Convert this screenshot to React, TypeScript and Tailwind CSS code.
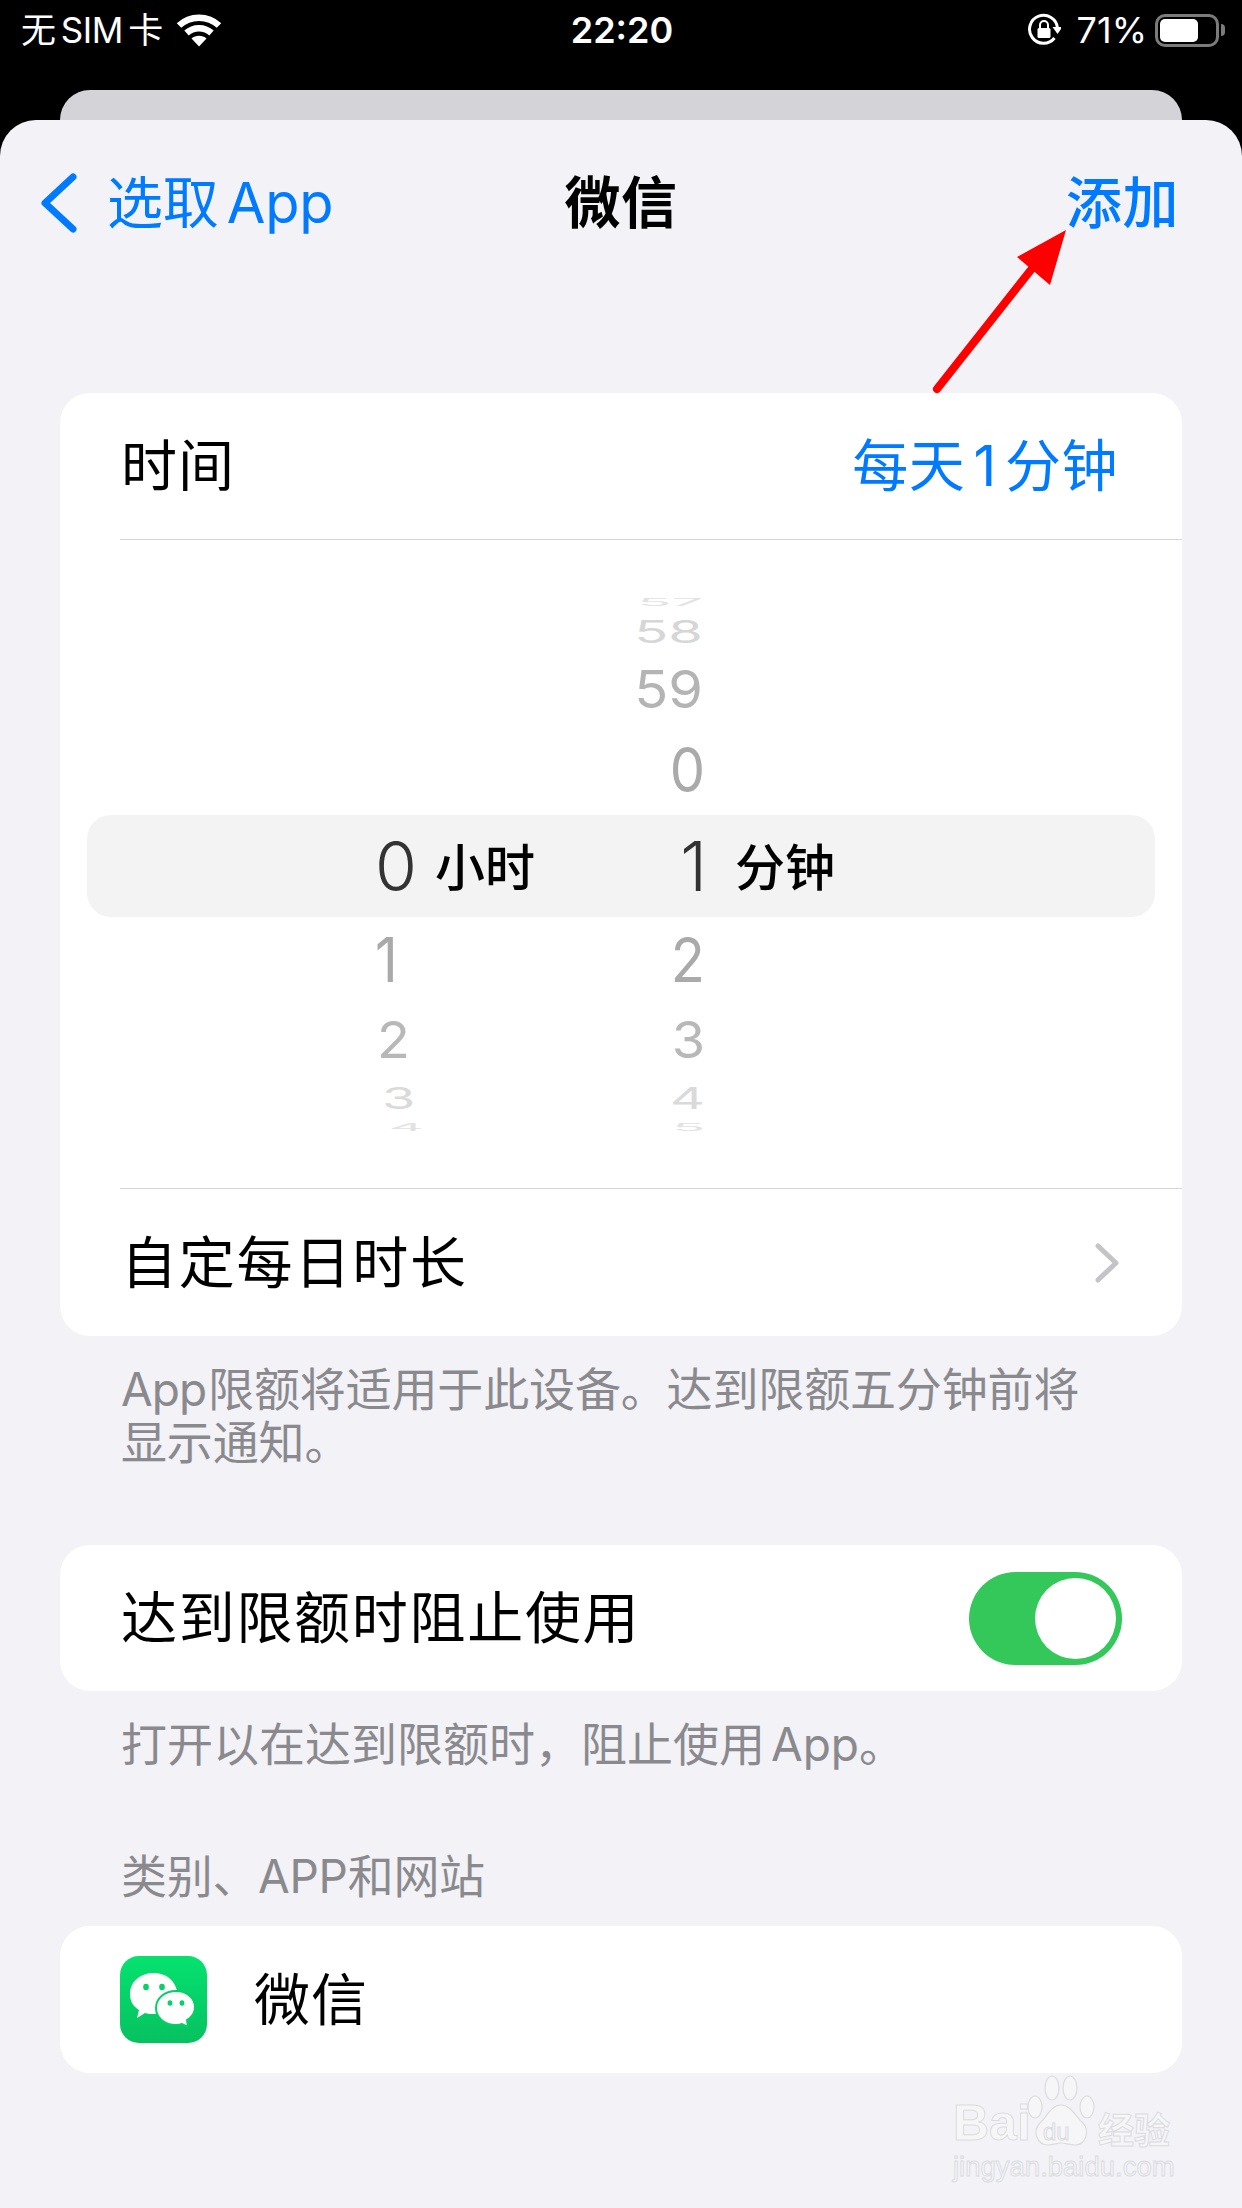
const wheel = [
  { h: 'h-[20px]', color: 'text-[#e2e2e2]', scale: 'scale-y-[0.18] text-[56px]', hour: '', minute: '57', hourPad: '' },
  { h: 'h-[40px]', color: 'text-[#d6d6d6]', scale: 'scale-y-[0.55] text-[56px]', hour: '', minute: '58', hourPad: '' },
  { h: 'h-[74px]', color: 'text-[#b4b4b4]', scale: 'scale-y-[0.93] text-[56px]', hour: '', minute: '59', hourPad: '' },
  { h: 'h-[88px]', color: 'text-[#aaaaaa]', scale: 'scale-y-[1.1] text-[56px]', hour: '', minute: '0', hourPad: '' },
  { h: 'h-[84px]', color: 'text-[#aaaaaa]', scale: 'scale-y-[1.1] text-[56px]', hour: '1', minute: '2', hourPad: 'pl-0' },
  { h: 'h-[76px]', color: 'text-[#b8b8b8]', scale: 'scale-y-[0.95] text-[54px]', hour: '2', minute: '3', hourPad: 'pl-[2px]' },
  { h: 'h-[42px]', color: 'text-[#dadada]', scale: 'scale-y-[0.55] text-[54px]', hour: '3', minute: '4', hourPad: 'pl-[7px]' },
  { h: 'h-[16px]', color: 'text-[#e2e2e2]', scale: 'scale-y-[0.18] text-[54px]', hour: '4', minute: '5', hourPad: 'pl-[14px]' },
]

function WheelRow({ row }: { row: (typeof wheel)[number] }) {
  return (
    <div className={`${row.h} flex items-center pl-[315px] overflow-visible ${row.color}`}>
      <div className={`w-[230px] leading-none ${row.hourPad}`}>
        <div className={`${row.scale} leading-none`}>{row.hour}</div>
      </div>
      <div className={`${row.minute.length === 1 ? 'w-[100px]' : 'w-[98px]'} text-right leading-none`}>
        <div className={`${row.scale} leading-none`}>{row.minute}</div>
      </div>
    </div>
  )
}

function WifiIcon() {
  return (
    <svg width="46" height="34" viewBox="0 0 46 34" fill="none" stroke="white" strokeWidth="6.5">
      <path d="M3 12.5C14 2 32 2 43 12.5" />
      <path d="M10.5 20c7-6.5 18-6.5 25 0" />
      <path d="M23 33.5 15.5 25.5c4-3.6 11-3.6 15 0Z" fill="white" stroke="none" />
    </svg>
  )
}

function RotationLock() {
  return (
    <svg width="34" height="34" viewBox="0 0 34 34" fill="none">
      <path d="M27.5 25A14 14 0 1 1 30.5 15" stroke="white" strokeWidth="3" />
      <path d="M25.5 14h10L30.5 21Z" fill="white" />
      <rect x="10.5" y="15" width="13" height="10" rx="1.5" fill="white" />
      <path d="M13 15v-3a4 4 0 0 1 8 0v3" stroke="white" strokeWidth="2" />
    </svg>
  )
}

function Battery() {
  return (
    <div className="flex items-center">
      <div className="w-[64px] h-[33px] rounded-[10px] border-[3px] border-[#7b7b7b] p-[2px]">
        <div className="w-[38px] h-full rounded-[5px] bg-white" />
      </div>
      <div className="w-[4px] h-[12px] ml-[2px] rounded-r-full bg-[#7b7b7b]" />
    </div>
  )
}

function WeChatIcon() {
  return (
    <svg width="87" height="87" viewBox="0 0 87 87" className="shrink-0 rounded-[19px]">
      <defs>
        <linearGradient id="wechat-bg" x1="0" y1="0" x2="0" y2="1">
          <stop offset="0" stopColor="#05e26f" />
          <stop offset="1" stopColor="#07c160" />
        </linearGradient>
      </defs>
      <rect width="87" height="87" fill="url(#wechat-bg)" />
      <path d="M34 17c-13 0-24 8-24 21 0 8 4 13 9 16l-2 8 8-5c3 1 6 1 9 1 1 0 3 0 4-1l20-17c-1-14-11-23-24-23Z" fill="white" />
      <ellipse cx="26" cy="31" rx="2.8" ry="3.2" fill="#06d268" />
      <ellipse cx="42" cy="31" rx="2.8" ry="3.2" fill="#06d268" />
      <path d="M56 35c-11 0-20 7-20 17s9 17 20 17c2 0 4 0 6-1l6 3-1-7c5-3 8-8 8-13 0-9-8-16-19-16Z" fill="white" stroke="#06cf66" strokeWidth="2" />
      <ellipse cx="50" cy="47" rx="2.4" ry="2.8" fill="#06d268" />
      <ellipse cx="62" cy="47" rx="2.4" ry="2.8" fill="#06d268" />
    </svg>
  )
}

function Watermark() {
  return (
    <div className="absolute left-[953px] top-[2075px] w-[226px] text-[#f6f6f9] font-['Liberation_Sans','Noto_Sans_CJK_SC',sans-serif] [-webkit-text-stroke:1px_#dcdcdf]">
      <div className="relative h-[76px]">
        <span className="absolute left-0 bottom-[3px] text-[50px] font-bold leading-none">Bai</span>
        <svg width="70" height="72" viewBox="0 0 70 72" fill="#f6f6f9" stroke="#dcdcdf" strokeWidth="1.2" className="absolute left-[73px] top-0">
          <ellipse cx="9" cy="32" rx="7" ry="11" />
          <ellipse cx="26" cy="13" rx="7" ry="12" />
          <ellipse cx="44" cy="13" rx="7" ry="12" />
          <ellipse cx="61" cy="32" rx="7" ry="11" />
          <path d="M35 30c-10 0-14 12-21 18-8 8-3 22 8 22 5 0 9-2 13-2s9 2 14 2c11 0 15-14 8-22-7-6-12-18-22-18Z" />
        </svg>
        <span className="absolute left-[90px] bottom-[7px] text-[24px] leading-none">du</span>
        <span className="absolute left-[145px] bottom-[1px] text-[36px] font-bold leading-none whitespace-nowrap">经验</span>
      </div>
      <div className="text-[27.5px] leading-[32px] whitespace-nowrap">jingyan.baidu.com</div>
    </div>
  )
}

export default function App() {
  return (
    <div className="relative w-[1242px] h-[2208px] overflow-hidden bg-black flex flex-col font-['Inter','Noto_Sans_CJK_SC',sans-serif]">
      {/* status bar */}
      <div className="h-[90px] pb-[30px] px-[21px] flex items-center justify-between text-white">
        <div className="w-[400px] flex items-center gap-[13px] text-[35px] leading-none whitespace-nowrap">
          <span className="[word-spacing:-4px] tracking-[-0.5px]">无 SIM 卡</span>
          <WifiIcon />
        </div>
        <div className="text-[36px] font-semibold leading-none -ml-[2px]">22:20</div>
        <div className="w-[400px] -mr-[4px] flex items-center justify-end gap-[12px] text-[36px] leading-none">
          <RotationLock />
          <span className="ml-[4px] -mr-[4px]">71%</span>
          <Battery />
        </div>
      </div>

      <div className="h-[30px] mx-[60px] rounded-t-[30px] bg-[#d4d3d8]" />

      {/* sheet */}
      <div className="flex-1 rounded-t-[36px] bg-[#f2f2f7] text-[56px] text-black">
        <div className="h-[166px] grid grid-cols-[1fr_auto_1fr] items-center px-[40px] leading-none">
          <div className="flex items-center gap-[29px] text-[#007aff] whitespace-nowrap">
            <svg width="38" height="62" viewBox="0 0 38 62" fill="none" stroke="#007aff" strokeWidth="7" strokeLinecap="round" strokeLinejoin="round">
              <path d="M33 5 5 31l28 26" />
            </svg>
            <span className="[word-spacing:-7px] tracking-[-0.3px]">选取 App</span>
          </div>
          <div className="text-center font-bold tracking-[0.5px]">微信</div>
          <div className="text-right pr-[23px] text-[#007aff] font-medium tracking-[0.5px]">添加</div>
        </div>

        {/* limit card */}
        <div className="mt-[107px] mx-[60px] rounded-[30px] bg-white overflow-hidden">
          <div className="h-[146px] pl-[61px] pr-[64px] flex items-center justify-between leading-none tracking-[1px]">
            <span>时间</span>
            <span className="text-[#007aff] [word-spacing:-8px] tracking-[0.5px]">每天 1 分钟</span>
          </div>
          <div className="ml-[60px] h-[1px] bg-[#d6d6d9]" />
          <div className="relative pt-[52px] pb-[52px]">
            <div className="absolute left-[27px] right-[27px] top-[275px] h-[102px] rounded-[24px] bg-[#f3f3f3]" />
            <div className="relative">
              {wheel.slice(0, 4).map((row) => (
                <WheelRow key={row.minute} row={row} />
              ))}
              <div className="h-[104px] flex items-center pl-[315px] text-[#333333]">
                <div className="w-[60px] text-[68px] font-light leading-none">0</div>
                <div className="w-[170px] pt-[4px] text-[50px] font-medium leading-none text-black whitespace-nowrap">小时</div>
                <div className="w-[102px] text-right text-[68px] font-light leading-none">1</div>
                <div className="ml-[28px] pt-[4px] text-[50px] font-medium leading-none text-black whitespace-nowrap">分钟</div>
              </div>
              {wheel.slice(4).map((row) => (
                <WheelRow key={row.minute} row={row} />
              ))}
            </div>
          </div>
          <div className="ml-[60px] h-[1px] bg-[#d6d6d9]" />
          <div className="h-[147px] pl-[61px] pr-[62px] flex items-center justify-between leading-none tracking-[1.8px]">
            <span>自定每日时长</span>
            <svg width="26" height="42" viewBox="0 0 26 42" fill="none" stroke="#c4c4c7" strokeWidth="5" strokeLinecap="round" strokeLinejoin="round">
              <path d="M4 4l18 17L4 38" />
            </svg>
          </div>
        </div>

        <p className="mt-[27px] mx-[121px] text-[46px] leading-[53px] text-[#8a8a8e] tracking-[-0.15px]">
          <span className="mr-[2px] tracking-[-1px]">App</span>限额将适用于此设备。达到限额五分钟前将<br />显示通知。
        </p>

        {/* block toggle card */}
        <div className="mt-[76px] mx-[60px] h-[146px] rounded-[30px] bg-white pl-[61px] pr-[60px] flex items-center justify-between leading-none tracking-[1.7px]">
          <span>达到限额时阻止使用</span>
          <div className="w-[153px] h-[93px] rounded-full bg-[#34c759] p-[6px] flex justify-end">
            <div className="w-[81px] h-[81px] rounded-full bg-white" />
          </div>
        </div>

        <p className="mt-[27px] mx-[121px] text-[46px] leading-[53px] text-[#8a8a8e] [word-spacing:-7px]">打开以在达到限额时，阻止使用 App。</p>

        <p className="mt-[79px] mx-[121px] text-[46px] leading-[53px] text-[#8a8a8e] tracking-[-0.3px]">类别、APP和网站</p>

        {/* app card */}
        <div className="mt-[23px] mx-[60px] h-[147px] rounded-[30px] bg-white pl-[60px] flex items-center gap-[47px] leading-none tracking-[1px]">
          <WeChatIcon />
          <span>微信</span>
        </div>
      </div>

      {/* annotation arrow */}
      <svg width="1242" height="2208" viewBox="0 0 1242 2208" className="absolute inset-0 pointer-events-none">
        <path d="M937 389 1034 266" stroke="#fe0000" strokeWidth="8" strokeLinecap="round" />
        <path d="M1066 230 1050 285 1017 257Z" fill="#fe0000" />
      </svg>

      <Watermark />
    </div>
  )
}
